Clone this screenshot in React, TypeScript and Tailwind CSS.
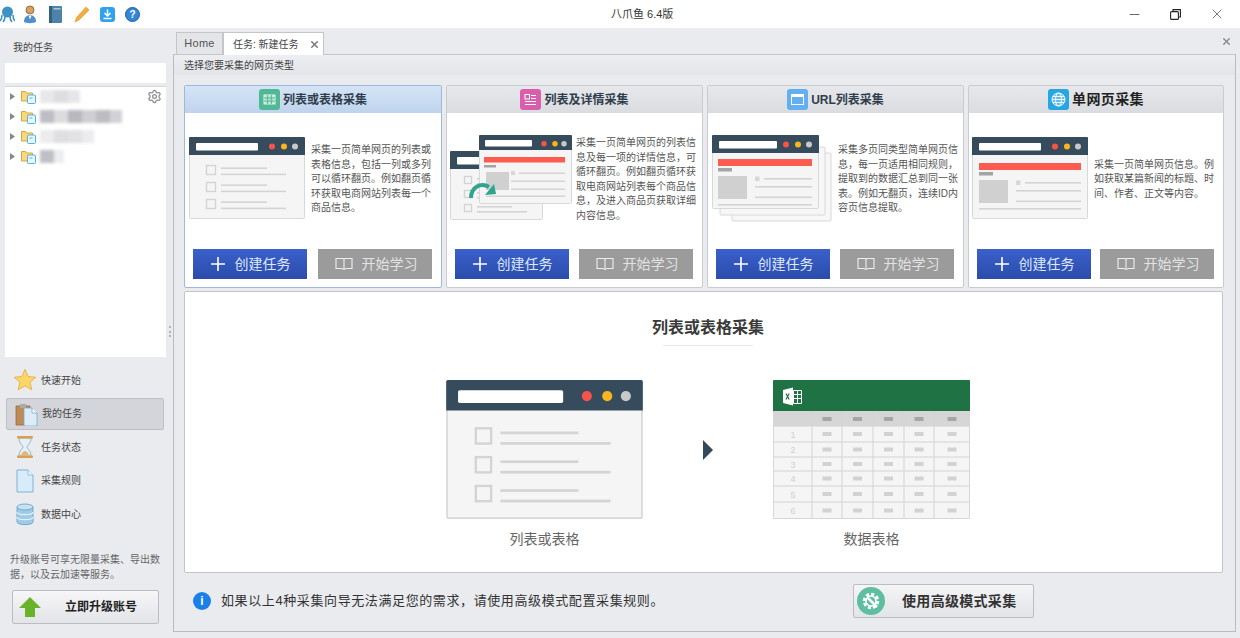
import { Settings, X, Minus } from "lucide-react"

const listText = {
  a: ["采集一页简单网页的列表或", "表格信息，包括一列或多列", "可以循环翻页。例如翻页循", "环获取电商网站列表每一个", "商品信息。"],
  b: ["采集一页简单网页的列表信", "息及每一项的详情信息，可", "循环翻页。例如翻页循环获", "取电商网站列表每个商品信", "息，及进入商品页获取详细", "内容信息。"],
  c: ["采集多页同类型简单网页信", "息，每一页适用相同规则，", "提取到的数据汇总到同一张", "表。例如无翻页，连续ID内", "容页信息提取。"],
  d: ["采集一页简单网页信息。例", "如获取某篇新闻的标题、时", "间、作者、正文等内容。"],
}

function Frame({ w, h, x = 0, y = 0, bar = 62 }: { w: number; h: number; x?: number; y?: number; bar?: number }) {
  return (
    <g transform={`translate(${x} ${y})`}>
      <rect x="0.5" y="0.5" width={w - 1} height={h - 1} rx="1" fill="#f5f5f5" stroke="#d8d8d8" />
      <path d={`M0 18V1a1 1 0 0 1 1-1h${w - 2}a1 1 0 0 1 1 1v17z`} fill="#364c5c" />
      <rect x="7" y="6" width={bar} height="7.5" rx="1" fill="#fff" />
      <circle cx={w - 33} cy="9.5" r="3" fill="#f8524c" />
      <circle cx={w - 21} cy="9.5" r="3" fill="#f9b51d" />
      <circle cx={w - 10} cy="9.5" r="3" fill="#c9c9c9" />
    </g>
  )
}

function ListMock({ width = 116, height = 82 }: { width?: number; height?: number }) {
  return (
    <svg width={width} height={height} viewBox="0 0 116 82" className="shrink-0">
      <Frame w={116} h={82} />
      {[28, 45, 62].map((y) => (
        <g key={y}>
          <rect x="17.5" y={y + 0.5} width="9" height="9" fill="none" stroke="#d4d4d4" strokeWidth="1.4" />
          <rect x="32" y={y + 2.4} width="46" height="1.6" fill="#d4d4d4" />
          <rect x="32" y={y + 8.6} width="65" height="1.6" fill="#d4d4d4" />
        </g>
      ))}
    </svg>
  )
}

function ArticleBody({ dx = 0, dy = 0, w = 102 }: { dx?: number; dy?: number; w?: number }) {
  return (
    <g transform={`translate(${dx} ${dy})`}>
      <rect x="7" y="26" width={w} height="7" fill="#fd5a50" />
      <rect x="7" y="35" width="14" height="3.5" fill="#a4a4a4" />
      <rect x="7" y="43" width="29" height="23" fill="#d0d0d0" />
      <rect x="44" y="43.5" width="4.5" height="4.5" fill="#d8d8d8" />
      <rect x="53" y="45" width={w - 46} height="1.6" fill="#d4d4d4" />
      <rect x="44" y="53" width={w - 37} height="1.6" fill="#d4d4d4" />
      <rect x="44" y="63.5" width={w - 37} height="1.6" fill="#d4d4d4" />
      <rect x="7" y="71" width={w} height="1.6" fill="#d4d4d4" />
    </g>
  )
}

function ArticleMock() {
  return (
    <svg width="116" height="82" viewBox="0 0 116 82" className="shrink-0">
      <Frame w={116} h={82} />
      <ArticleBody />
    </svg>
  )
}

function DetailMock() {
  return (
    <svg width="122" height="86" viewBox="0 0 122 86" className="shrink-0">
      <g transform="translate(0 16)">
        <Frame w={93} h={69} bar={50} />
        {[25, 39, 53].map((y) => (
          <g key={y}>
            <rect x="14.5" y={y + 0.5} width="7" height="7" fill="none" stroke="#d4d4d4" strokeWidth="1.4" />
            <rect x="27" y={y + 2} width="35" height="1.6" fill="#d4d4d4" />
            <rect x="27" y={y + 7} width="50" height="1.6" fill="#d4d4d4" />
          </g>
        ))}
      </g>
      <rect x="29.5" y="0.5" width="92" height="68" rx="1" fill="#f5f5f5" stroke="#d8d8d8" />
      <path d="M29 15V1a1 1 0 0 1 1-1h91a1 1 0 0 1 1 1v14z" fill="#364c5c" />
      <rect x="35" y="5" width="47" height="6.5" rx="1" fill="#fff" />
      <circle cx="94" cy="8.7" r="2.7" fill="#f8524c" />
      <circle cx="105" cy="8.7" r="2.7" fill="#f9b51d" />
      <circle cx="114" cy="8.7" r="2.7" fill="#c9c9c9" />
      <rect x="34" y="22" width="81" height="5.5" fill="#fd5a50" />
      <rect x="34" y="30" width="12" height="2.5" fill="#a4a4a4" />
      <rect x="36" y="37" width="23" height="18" fill="#d0d0d0" />
      <rect x="61" y="36" width="4" height="4" fill="#d8d8d8" />
      <rect x="69" y="37.5" width="46" height="1.5" fill="#d4d4d4" />
      <rect x="61" y="45.5" width="54" height="1.5" fill="#d4d4d4" />
      <rect x="61" y="53.5" width="54" height="1.5" fill="#d4d4d4" />
      <rect x="36" y="60.5" width="79" height="1.5" fill="#d4d4d4" />
      <path d="M21 63C21 52 31 47 39 52" fill="none" stroke="#2fa58e" strokeWidth="4" />
      <path d="M44 49L46 59L35 60z" fill="#2fa58e" />
    </svg>
  )
}

function PagesMock() {
  return (
    <svg width="120" height="87" viewBox="0 0 120 87" className="shrink-0">
      <rect x="20" y="18" width="99" height="68" rx="1" fill="#f7f7f7" stroke="#d8d8d8" />
      <rect x="8" y="12" width="105" height="68" rx="1" fill="#f7f7f7" stroke="#d8d8d8" />
      <Frame w={107} h={74} bar={58} />
      <ArticleBody dx={-1} dy={-2} w={94} />
    </svg>
  )
}

function ExcelMock() {
  const cols = [39, 69, 100, 131, 161, 197]
  const rows = [46, 62, 77, 91, 106, 122, 139]
  return (
    <svg width="197" height="139" viewBox="0 0 197 139" className="shrink-0">
      <rect x="0.5" y="0.5" width="196" height="138" rx="1" fill="#f5f5f5" stroke="#d8d8d8" />
      <rect x="0" y="31" width="197" height="15" fill="#d6d6d6" />
      <path d="M0 31V1a1 1 0 0 1 1-1h195a1 1 0 0 1 1 1v30z" fill="#1f7244" />
      <path d="M10 10L20 7.5V25.5L10 23z" fill="#fff" />
      <path d="M13 13.5l3.2 6M16.2 13.5l-3.2 6" stroke="#1f7244" strokeWidth="1.2" />
      <path d="M20.5 10.5h8v13h-8zM24.5 10.5v13M20.5 14.5h8M20.5 18.5h8" fill="none" stroke="#fff" strokeWidth="1" />
      {cols.map((x) => (
        <rect key={x} x={x - 0.5} y="31" width="1" height="108" fill="#d4d4d4" />
      ))}
      {rows.map((y) => (
        <rect key={y} x="0" y={y - 0.5} width="197" height="1" fill="#d4d4d4" />
      ))}
      {cols.slice(0, 5).map((x, i) => (
        <g key={x}>
          <rect x={(x + cols[i + 1]) / 2 - 4.5} y="37" width="9" height="4" fill="#a6a6a6" />
          {rows.slice(0, 6).map((y, j) => (
            <rect key={y} x={(x + cols[i + 1]) / 2 - 4.5} y={(y + rows[j + 1]) / 2 - 2} width="9" height="4" fill="#d2d2d2" />
          ))}
        </g>
      ))}
      {rows.slice(0, 6).map((y, j) => (
        <text key={y} x="20" y={(y + rows[j + 1]) / 2 + 3.5} textAnchor="middle" fontSize="9" fill="#cfcfcf">
          {j + 1}
        </text>
      ))}
    </svg>
  )
}

function CardIcon({ kind }: { kind: string }) {
  const bg: Record<string, string> = { a: "#4fb894", b: "#d95fae", c: "#62b0f2", d: "#28a5e3" }
  return (
    <svg width="21" height="21" viewBox="0 0 21 21" className="shrink-0">
      <rect width="21" height="21" rx="3" fill={bg[kind]} />
      {kind === "a" && (
        <g fill="none" stroke="#dff3ea" strokeWidth="1">
          <rect x="5" y="6" width="11" height="9" fill="#bfe6d6" />
          <path d="M5 9h11M5 12h11M8.7 6v9M12.3 6v9" stroke="#4fb894" />
        </g>
      )}
      {kind === "b" && (
        <g fill="#fff">
          <rect x="5" y="5.5" width="4.5" height="4.5" fill="none" stroke="#fff" />
          <rect x="11" y="6" width="5" height="1" />
          <rect x="11" y="9" width="5" height="1" />
          <rect x="5" y="12" width="11" height="1" />
          <rect x="5" y="15" width="11" height="1" />
        </g>
      )}
      {kind === "c" && (
        <g>
          <rect x="4" y="5" width="13" height="11" fill="#fff" />
          <rect x="5" y="8" width="11" height="7" fill="#62b0f2" />
        </g>
      )}
      {kind === "d" && (
        <g fill="none" stroke="#fff" strokeWidth="0.9">
          <circle cx="10.5" cy="10.5" r="6.5" fill="#ffffff40" />
          <ellipse cx="10.5" cy="10.5" rx="3" ry="6.5" />
          <path d="M4 10.5h13M5 7.5h11M5 13.5h11" />
        </g>
      )}
    </svg>
  )
}

function Card(props: {
  kind: string
  title: string
  lines: string[]
  active?: boolean
  big?: boolean
  pl: string
  gap: string
  art: React.ReactNode
}) {
  const { kind, title, lines, active, big, pl, gap, art } = props
  return (
    <div className={`h-[203px] flex flex-col rounded-[2px] border bg-white ${active ? "border-[#9db8dc]" : "border-[#c9cbd0]"}`}>
      <div
        className={`h-[27px] flex items-center justify-center gap-[3px] bg-gradient-to-b ${
          active ? "from-[#d5e4f6] to-[#bed4ed]" : "from-[#e6e8eb] to-[#dadcdf]"
        }`}
      >
        <CardIcon kind={kind} />
        <span className={`font-bold whitespace-nowrap ${big ? "text-[14px] tracking-[0.4px] text-[#222]" : "text-[12px] text-[#2f3d4c]"}`}>{title}</span>
      </div>
      <div className={`h-[130px] flex items-center ${pl} ${gap}`}>
        {art}
        <div className="mt-[3px] text-[10px] leading-[14.5px] text-[#555] whitespace-nowrap">
          {lines.map((l) => (
            <div key={l}>{l}</div>
          ))}
        </div>
      </div>
      <div className="mt-[6px] flex justify-between pl-[8px] pr-[9px]">
        <button className="w-[114px] h-[30px] flex items-center justify-center gap-[9px] bg-gradient-to-b from-[#3a60cb] to-[#2b4cab] text-[14px] text-[#dfe7fa]">
          <svg width="16" height="16" viewBox="0 0 16 16">
            <path d="M8 1v14M1 8h14" stroke="#fff" strokeWidth="1.6" />
          </svg>
          创建任务
        </button>
        <button className="w-[114px] h-[30px] pl-[2px] flex items-center justify-center gap-[9px] bg-[#9b9b9b] text-[14px] text-[#e2e2e2]">
          <svg width="18" height="14" viewBox="0 0 18 14" fill="none" stroke="#eee" strokeWidth="1.1">
            <path d="M1 1.5h7l1 1 1-1h7v10h-6l-2 1-2-1H1zM9 2.5v9" />
          </svg>
          开始学习
        </button>
      </div>
    </div>
  )
}

function Folder() {
  return (
    <svg width="15" height="15" viewBox="0 0 15 15" className="shrink-0">
      <path d="M0.5 2.5h4l1 1.5h6v8h-11z" fill="#fbd877" stroke="#d9a441" />
      <rect x="6.5" y="6" width="8" height="8.5" rx="1" fill="#e9f6fd" stroke="#4eb4e4" />
      <rect x="8.5" y="8.5" width="3" height="1" fill="#4eb4e4" />
    </svg>
  )
}

const blurRows = [
  [["#e8e8ea", 14], ["#dedee1", 14], ["#e6e6e8", 12]],
  [["#bdbdc3", 14], ["#dcdcdf", 14], ["#b8b8bf", 14], ["#cfcfd3", 14], ["#bcbcc2", 14], ["#d2d2d6", 12]],
  [["#ececee", 14], ["#dfdfe2", 14], ["#e2e2e5", 14], ["#ececee", 12]],
  [["#bfc0c6", 14], ["#ecedef", 10]],
] as [string, number][][]

function TreeRow({ blocks }: { blocks: [string, number][] }) {
  return (
    <div className="h-[20px] flex items-center pl-[5px]">
      <svg width="5" height="7" viewBox="0 0 5 7" className="shrink-0">
        <path d="M0 0l5 3.5L0 7z" fill="#888" />
      </svg>
      <div className="ml-[6px]">
        <Folder />
      </div>
      <div className="flex ml-[4px] blur-[1.5px]">
        {blocks.map(([c, w], i) => (
          <div key={i} className="h-[13px]" style={{ backgroundColor: c, width: w }} />
        ))}
      </div>
    </div>
  )
}

function NavIcon({ name }: { name: string }) {
  if (name === "star")
    return (
      <svg width="24" height="24" viewBox="0 0 24 24">
        <path d="M12 1.5l3.2 7 7.6.8-5.7 5 1.7 7.5-6.8-3.9-6.8 3.9 1.7-7.5-5.7-5 7.6-.8z" fill="#fcd767" stroke="#e0a93c" strokeWidth="0.8" />
      </svg>
    )
  if (name === "clip")
    return (
      <svg width="24" height="24" viewBox="0 0 24 24">
        <path d="M2 4h14v19H2z" fill="#c08a54" stroke="#8f6238" strokeWidth="0.7" />
        <rect x="6" y="2" width="6" height="4" fill="#a9a9a9" />
        <path d="M10 6h8l5 5v13H10z" fill="#dcedf8" stroke="#72acd2" strokeWidth="0.8" />
        <path d="M18 6v5h5" fill="#fff" stroke="#72acd2" strokeWidth="0.8" />
      </svg>
    )
  if (name === "hour")
    return (
      <svg width="24" height="24" viewBox="0 0 24 24">
        <path d="M6 3h12c0 6-4 7-4 9s4 3 4 9H6c0-6 4-7 4-9S6 9 6 3z" fill="#e4f1f8" stroke="#8aa6b6" strokeWidth="0.8" />
        <path d="M8 20c1-3 3-4 4-4s3 1 4 4z" fill="#e4b67a" />
        <rect x="4" y="1" width="16" height="2.4" rx="1" fill="#d9a04f" />
        <rect x="4" y="20.6" width="16" height="2.4" rx="1" fill="#d9a04f" />
      </svg>
    )
  if (name === "doc")
    return (
      <svg width="24" height="24" viewBox="0 0 24 24">
        <path d="M4 1h11l5 5v17H4z" fill="#d7ebf8" stroke="#7fb3d6" strokeWidth="1" />
        <path d="M15 1v5h5" fill="#f3f9fd" stroke="#7fb3d6" strokeWidth="0.8" />
      </svg>
    )
  return (
    <svg width="24" height="24" viewBox="0 0 24 24">
      <path d="M4 5v15c0 3.500 16 3.500 16 0V5z" fill="#9fcbe6" stroke="#5f9fc8" strokeWidth="0.8" />
      <ellipse cx="12" cy="5" rx="8" ry="3" fill="#c5e2f3" stroke="#5f9fc8" strokeWidth="0.8" />
      <path d="M4 10c0 3.500 16 3.500 16 0M4 15c0 3.500 16 3.500 16 0" fill="none" stroke="#e4f2fa" strokeWidth="1.2" />
    </svg>
  )
}

const navItems = [
  ["star", "快速开始"],
  ["clip", "我的任务"],
  ["hour", "任务状态"],
  ["doc", "采集规则"],
  ["db", "数据中心"],
]

function TopIcons() {
  return (
    <div className="flex items-center">
      <svg width="15" height="17" viewBox="0 0 15 17" className="ml-0">
        <circle cx="7.5" cy="6" r="5.5" fill="#3a93c4" />
        <path d="M2 9c0 4-1 5-2 6M5 10c0 3-1 5-2 6M10 10c0 3 1 5 2 6M13 9c0 4 1 5 2 6" stroke="#3a93c4" strokeWidth="1.6" fill="none" />
      </svg>
      <svg width="14" height="19" viewBox="0 0 14 19" className="ml-[8px]">
        <circle cx="7" cy="5" r="4" fill="#d9a066" stroke="#8a5a2e" strokeWidth="0.8" />
        <path d="M1 17c0-5 3-7 6-7s6 2 6 7c-3 1.500-9 1.500-12 0z" fill="#4f90cc" />
        <path d="M5.500 10.500h3l-1.500 4z" fill="#fff" />
      </svg>
      <svg width="13" height="17" viewBox="0 0 13 17" className="ml-[12px]">
        <rect width="13" height="17" rx="1" fill="#4d83a8" />
        <rect width="3" height="17" fill="#34607f" />
        <rect x="4.500" y="2" width="7" height="1.500" fill="#a8c8de" />
      </svg>
      <svg width="16" height="17" viewBox="0 0 16 17" className="ml-[12px]">
        <path d="M12 1l3 3L5 14l-4 2 1.500-4.500z" fill="#f4ad3d" stroke="#e39424" strokeWidth="0.6" />
      </svg>
      <svg width="15" height="15" viewBox="0 0 15 15" className="ml-[10px]">
        <rect width="15" height="15" rx="3" fill="#2fa2ef" />
        <path d="M7.500 2.500v6M4.500 6l3 3 3-3M3.500 11.500h8" stroke="#fff" strokeWidth="1.500" fill="none" />
      </svg>
      <div className="ml-[10px] w-[15px] h-[15px] rounded-full bg-[#3486d4] border border-[#1d5fa5] flex items-center justify-center text-[10px] font-bold text-white">?</div>
    </div>
  )
}

export default function App() {
  return (
    <div className="w-[1240px] h-[638px] overflow-hidden flex flex-col bg-[#e9ebef] font-['Liberation_Sans','Noto_Sans_CJK_SC',sans-serif]">
      {/* 标题栏 */}
      <div className="h-[28px] shrink-0 bg-white flex items-center pl-0 pr-[15px]">
        <TopIcons />
        <div className="ml-[471px] text-[11px] text-[#333] whitespace-nowrap">八爪鱼 6.4版</div>
        <div className="ml-auto flex items-center gap-[28px] text-[#333]">
          <Minus size={15} strokeWidth={1.2} />
          <svg width="11" height="11" viewBox="0 0 11 11" fill="none" stroke="#222" strokeWidth="1.100">
            <rect x="0.600" y="2.600" width="7.800" height="7.800" rx="1" />
            <path d="M3 2.500V.6h7.400V8H8.500" />
          </svg>
          <X size={16} strokeWidth={1} />
        </div>
      </div>

      <div className="flex-1 flex min-h-0">
        {/* 左侧栏 */}
        <div className="w-[173px] shrink-0 relative flex flex-col">
          <div className="h-[35px] pl-[13px] pt-[11px] text-[10px] leading-[18px] text-[#444]">我的任务</div>
          <div className="ml-[5px] w-[161px] h-[20px] bg-white" />
          <div className="ml-[5px] mt-[3px] w-[161px] h-[271px] bg-white border-t border-[#d5d7db] relative">
            <div className="-mt-px">
              {blurRows.map((b, i) => (
                <TreeRow key={i} blocks={b} />
              ))}
            </div>
            <Settings size={15} className="absolute right-[4px] top-[2px] text-[#8c8c8c]" />
          </div>
          <div className="mt-[7px] ml-[6px] w-[158px] flex flex-col gap-[1.5px]">
            {navItems.map(([icon, label]) => (
              <div
                key={label}
                className={`h-[32px] flex items-center gap-[4px] pl-[7px] rounded-[2px] text-[10px] text-[#444] ${
                  label === "我的任务" ? "bg-[#d3d5da] border border-[#bdbfc4]" : ""
                }`}
              >
                <NavIcon name={icon} />
                {label}
              </div>
            ))}
          </div>
          <div className="mt-[22px] pl-[10px] text-[10px] leading-[15px] text-[#666] whitespace-nowrap">
            <div>升级账号可享无限量采集、导出数</div>
            <div>据，以及云加速等服务。</div>
          </div>
          <button className="mt-[8px] ml-[12px] w-[147px] h-[34px] flex items-center rounded-[2px] border border-[#bbbdc2] bg-gradient-to-b from-[#f6f6f8] to-[#e3e4e8] text-[12px] font-bold text-[#222]">
            <svg width="22" height="22" viewBox="0 0 22 22" className="ml-[6px]">
              <path d="M11 1L22 12H16V21H6V12H0z" fill="#69b32a" />
            </svg>
            <span className="ml-[24px]">立即升级账号</span>
          </button>
          <div className="absolute left-[169px] top-[298px] w-[2px] h-[11px] border-l-2 border-dotted border-[#b0b2b6]" />
        </div>

        {/* 主区域 */}
        <div className="flex-1 pr-[4px] flex flex-col min-w-0">
          <div className="h-[26px] shrink-0 flex items-end pl-[3px] relative">
            <div className="h-[22px] w-[47px] flex items-center justify-center bg-[#e3e5e9] border border-b-0 border-[#c3c5ca] text-[11px] tracking-[0.3px] text-[#555]">Home</div>
            <div className="h-[23px] w-[101px] -mb-px z-10 flex items-center pl-[9px] bg-white border border-b-0 border-[#c3c5ca] text-[10px] text-[#444] whitespace-nowrap">
              任务: 新建任务
              <X size={11} strokeWidth={3} className="ml-[10px] shrink-0 text-[#777]" />
            </div>
            <X size={11} strokeWidth={3} className="absolute right-[4px] top-[8px] text-[#888]" />
          </div>
          <div className="h-[578px] shrink-0 border border-[#b9bbc0] border-t-[#c3c5ca]">
            <div className="h-[20px] pl-[10px] flex items-center bg-gradient-to-b from-[#eceef1] to-[#e3e5e9] text-[10px] text-[#444]">选择您要采集的网页类型</div>
            <div className="pl-[10px] pt-[10px]">
              <div className="w-[1040px] grid grid-cols-[258px_257px_257px_256px] gap-[4px]">
                <Card kind="a" title="列表或表格采集" lines={listText.a} active pl="pl-[4px]" gap="gap-[6px]" art={<ListMock />} />
                <Card kind="b" title="列表及详情采集" lines={listText.b} pl="pl-[3px]" gap="gap-[4px]" art={<DetailMock />} />
                <Card kind="c" title="URL列表采集" lines={listText.c} pl="pl-[4px]" gap="gap-[6px]" art={<PagesMock />} />
                <Card kind="d" title="单网页采集" lines={listText.d} big pl="pl-[3px]" gap="gap-[6px]" art={<ArticleMock />} />
              </div>
              <div className="mt-[3px] w-[1039px] h-[282px] bg-white border border-[#c3c5ca] rounded-[2px] flex flex-col items-center pl-[9px] pt-[24px]">
                <div className="text-[16px] leading-[24px] font-bold text-[#3a3a3a]">列表或表格采集</div>
                <div className="mt-[5px] w-[90px] h-[1px] bg-[#e6e6e6]" />
                <div className="mt-[34px] flex items-start">
                  <div className="flex flex-col items-center">
                    <ListMock width={197} height={139} />
                    <div className="mt-[10px] text-[14px] leading-[20px] text-[#666]">列表或表格</div>
                  </div>
                  <svg width="10" height="20" viewBox="0 0 10 20" className="mx-[60px] mt-[60px]">
                    <path d="M0 0l10 10L0 20z" fill="#34495a" />
                  </svg>
                  <div className="flex flex-col items-center">
                    <ExcelMock />
                    <div className="mt-[10px] text-[14px] leading-[20px] text-[#666]">数据表格</div>
                  </div>
                </div>
              </div>
              <div className="h-[56px] flex items-center pl-[9px]">
                <div className="w-[18px] h-[18px] rounded-full bg-[#1a7fe8] flex items-center justify-center text-[12px] font-bold text-white">i</div>
                <div className="ml-[10px] text-[13px] tracking-[0.6px] text-[#333] whitespace-nowrap">如果以上4种采集向导无法满足您的需求，请使用高级模式配置采集规则。</div>
                <button className="ml-[189px] w-[181px] h-[34px] flex items-center rounded-[2px] border border-[#bbbdc2] bg-gradient-to-b from-[#f5f5f7] to-[#e3e4e8] text-[14px] tracking-[0.3px] font-bold text-[#333] whitespace-nowrap">
                  <svg width="28" height="28" viewBox="0 0 28 28" className="ml-[3px]">
                    <circle cx="14" cy="14" r="14" fill="#5ebfa0" />
                    <circle cx="14" cy="14" r="6.500" fill="none" stroke="#fff" strokeWidth="3.500" strokeDasharray="3 2" />
                    <circle cx="14" cy="14" r="5" fill="none" stroke="#fff" strokeWidth="1.500" />
                    <path d="M11 11l9 9" stroke="#fff" strokeWidth="2.500" />
                  </svg>
                  <span className="ml-[17px]">使用高级模式采集</span>
                </button>
              </div>
            </div>
          </div>
        </div>
      </div>
    </div>
  )
}
